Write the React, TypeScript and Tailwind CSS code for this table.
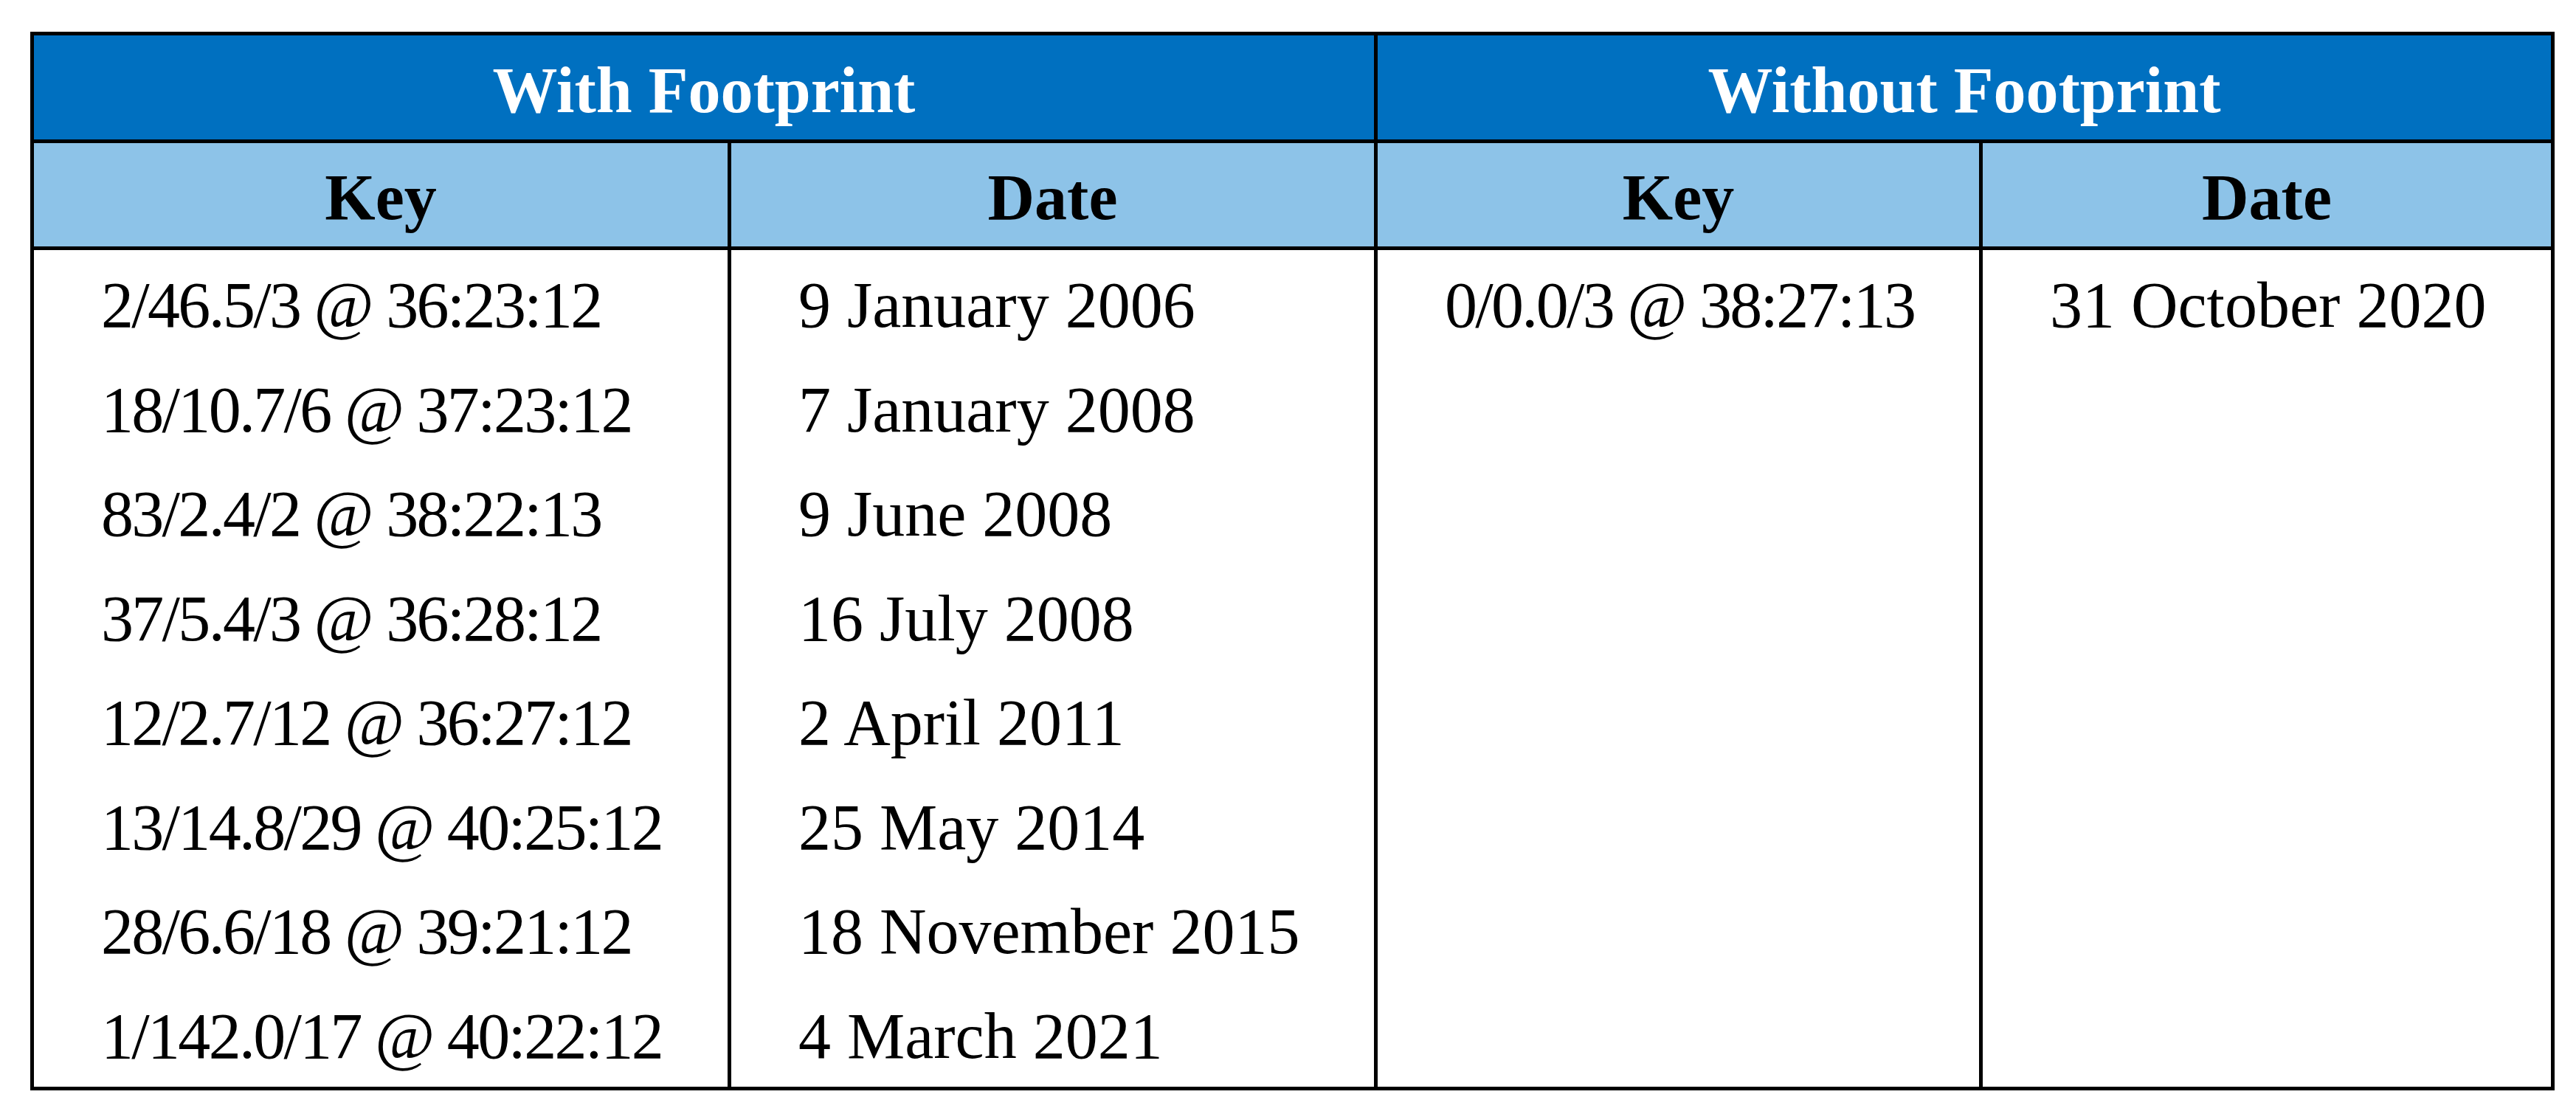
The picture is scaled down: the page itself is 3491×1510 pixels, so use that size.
import React from "react";

const withKeys = [
  "2/46.5/3 @ 36:23:12",
  "18/10.7/6 @ 37:23:12",
  "83/2.4/2 @ 38:22:13",
  "37/5.4/3 @ 36:28:12",
  "12/2.7/12 @ 36:27:12",
  "13/14.8/29 @ 40:25:12",
  "28/6.6/18 @ 39:21:12",
  "1/142.0/17 @ 40:22:12",
];

const withDates = [
  "9 January 2006",
  "7 January 2008",
  "9 June 2008",
  "16 July 2008",
  "2 April 2011",
  "25 May 2014",
  "18 November 2015",
  "4 March 2021",
];

function Cell({ items, tight }: { items: string[]; tight?: boolean }) {
  return (
    <div className="pt-[4px] pl-[91px]">
      {items.map((t, i) => (
        <div
          key={i}
          className={
            "leading-[141.5px] whitespace-nowrap " +
            (tight ? "tracking-[-2.7px]" : "")
          }
        >
          {t}
        </div>
      ))}
    </div>
  );
}

export default function App() {
  return (
    <div className="w-[3491px] h-[1510px] bg-white pt-[43px] pl-[41px] font-['Liberation_Serif',serif] text-black">
      <div className="w-[3421px] border-[5px] border-black">
        {/* Group header */}
        <div className="flex h-[146px] border-b-[5px] border-black bg-[#0070C0] text-white font-bold text-[88px] leading-[88px]">
          <div className="w-[1816px] pt-[31px] text-center whitespace-nowrap">
            With Footprint
          </div>
          <div className="w-[1595px] border-l-[5px] border-black pt-[31px] text-center whitespace-nowrap">
            Without Footprint
          </div>
        </div>
        {/* Sub header */}
        <div className="flex h-[145px] border-b-[5px] border-black bg-[#8DC3E8] font-bold text-[88px] leading-[88px]">
          <div className="w-[940px] pt-[30px] text-center">Key</div>
          <div className="w-[876px] border-l-[5px] border-black pt-[30px] text-center">
            Date
          </div>
          <div className="w-[820px] border-l-[5px] border-black pt-[30px] text-center">
            Key
          </div>
          <div className="w-[775px] border-l-[5px] border-black pt-[30px] text-center">
            Date
          </div>
        </div>
        {/* Body */}
        <div className="flex h-[1134px] text-[88px]">
          <div className="w-[940px]">
            <Cell items={withKeys} tight />
          </div>
          <div className="w-[876px] border-l-[5px] border-black">
            <Cell items={withDates} />
          </div>
          <div className="w-[820px] border-l-[5px] border-black">
            <Cell items={["0/0.0/3 @ 38:27:13"]} tight />
          </div>
          <div className="w-[775px] border-l-[5px] border-black">
            <Cell items={["31 October 2020"]} />
          </div>
        </div>
      </div>
    </div>
  );
}
